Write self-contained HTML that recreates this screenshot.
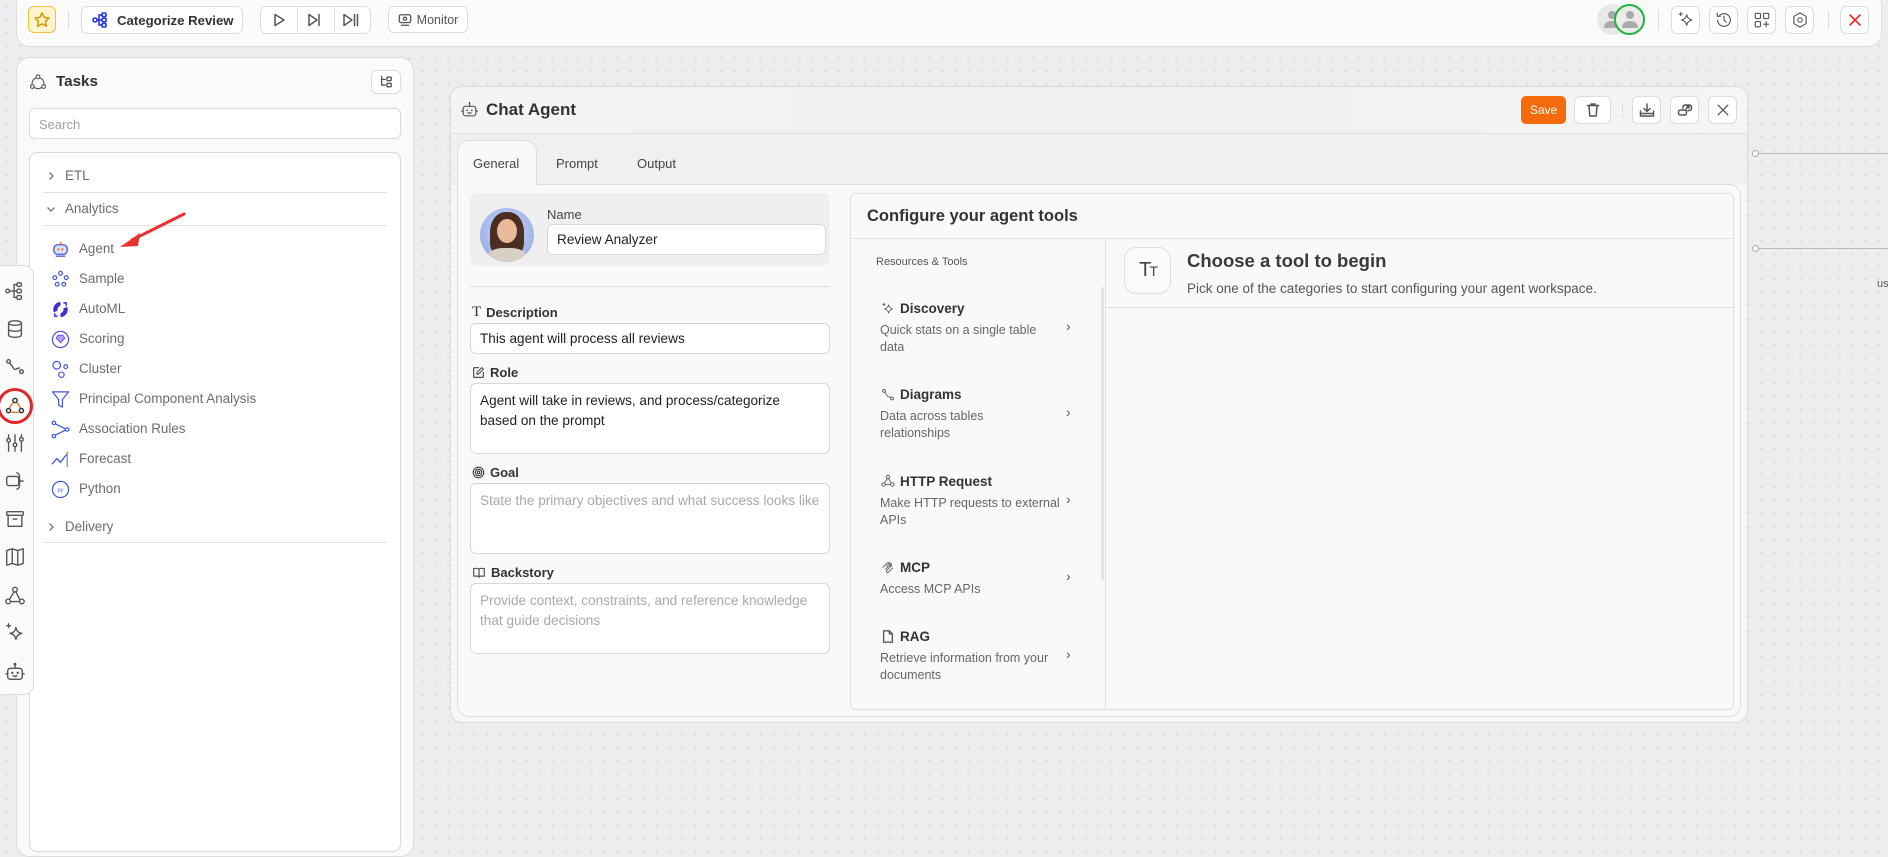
<!DOCTYPE html>
<html><head><meta charset="utf-8">
<style>
*{box-sizing:border-box;margin:0;padding:0}
body{width:1888px;height:822px;overflow:hidden;position:relative;font-family:"Liberation Sans",sans-serif;background:#ededef;background-image:radial-gradient(#d6d6da 1px,transparent 1.2px);background-size:13px 13px;color:#333}
.a{position:absolute}
.btn{position:absolute;border:1px solid #dcdcdc;border-radius:6px;background:#fff;display:flex;align-items:center;justify-content:center}
svg{display:block}
.ic{fill:none;stroke:#555;stroke-width:1.5;stroke-linecap:round;stroke-linejoin:round}
.li{position:absolute;left:79px;font-size:13.4px;color:#6b6b73}
.lic{position:absolute;left:51px;width:19px;height:19px}
.lbl{position:absolute;left:472px;font-size:13px;font-weight:bold;color:#333;display:flex;align-items:center;gap:5px}
.inp{position:absolute;left:470px;width:360px;border:1px solid #d8d8d8;border-radius:6px;background:#fff;font-size:13.6px;color:#222;padding:7px 9px;line-height:20px}
.ph{color:#a8a8ae}
.tt{position:absolute;left:900px;font-size:13.5px;font-weight:bold;color:#333}
.td{position:absolute;left:880px;font-size:12.5px;color:#666;line-height:17px;white-space:nowrap}
.chev{position:absolute;left:1066px;font-size:14px;color:#555}
.ri{position:absolute;left:6px;width:22px;height:22px}
</style></head><body>

<!-- top bar -->
<div class="a" style="left:16px;top:-10px;width:1866px;height:57px;background:#fbfbfb;border:1px solid #dedede;border-radius:14px"></div>
<div class="btn" style="left:28px;top:6px;width:28px;height:27px;background:#fff4cc;border-color:#f0c040">
<svg width="18" height="18" viewBox="0 0 24 24"><path d="M12 2.5l2.9 6 6.5.8-4.8 4.5 1.2 6.5L12 17.1 6.2 20.3l1.2-6.5L2.6 9.3l6.5-.8z" fill="none" stroke="#d39a00" stroke-width="2" stroke-linejoin="round"/></svg></div>
<div class="a" style="left:68px;top:10px;width:1px;height:20px;background:#ddd"></div>
<div class="btn" style="left:81px;top:6px;width:162px;height:28px;justify-content:flex-start;padding-left:10px;gap:9px;font-weight:bold;font-size:13.2px;color:#333;white-space:nowrap">
<svg width="16" height="16" viewBox="0 0 16 16"><g fill="none" stroke="#2233dd" stroke-width="1.6"><circle cx="3" cy="8" r="2"/><rect x="10" y="1" width="4" height="3.5" rx="1"/><rect x="10" y="6.2" width="4" height="3.5" rx="1"/><rect x="10" y="11.5" width="4" height="3.5" rx="1"/><path d="M5 8h5M7 8V3h3M7 8v5h3"/></g></svg>Categorize Review</div>
<div class="btn" style="left:260px;top:6px;width:111px;height:28px;justify-content:space-around">
<svg width="16" height="16" viewBox="0 0 16 16"><path class="ic" d="M4 2.5l9 5.5-9 5.5z"/></svg>
<svg width="16" height="16" viewBox="0 0 16 16"><path class="ic" d="M3 2.5l8 5.5-8 5.5zM13 2.5v11"/></svg>
<svg width="18" height="16" viewBox="0 0 18 16"><path class="ic" d="M2 2.5l8 5.5-8 5.5zM12.5 2.5v11M15.5 2.5v11"/></svg>
</div>
<div class="a" style="left:297px;top:6px;width:1px;height:28px;background:#ddd"></div>
<div class="a" style="left:334px;top:6px;width:1px;height:28px;background:#ddd"></div>
<div class="btn" style="left:388px;top:6px;width:80px;height:27px;gap:5px;font-size:12.5px;color:#555">
<svg width="14" height="14" viewBox="0 0 16 16"><g class="ic"><rect x="1.5" y="2" width="13" height="9" rx="2"/><circle cx="8" cy="6.5" r="1.8"/><path d="M4 14h8"/></g></svg>Monitor</div>

<div class="a" style="left:1597px;top:4px;width:31px;height:31px;border-radius:50%;background:#e8e8e8"></div>
<svg class="a" style="left:1602px;top:9px" width="20" height="20" viewBox="0 0 20 20"><circle cx="10" cy="6" r="4" fill="#aaa"/><path d="M2 19c0-5 3.5-7 8-7s8 2 8 7z" fill="#aaa"/></svg>
<div class="a" style="left:1614px;top:4px;width:31px;height:31px;border-radius:50%;background:#ececec;border:2px solid #1fb33c"></div>
<svg class="a" style="left:1620px;top:9px" width="20" height="20" viewBox="0 0 20 20"><circle cx="10" cy="6" r="4" fill="#aaa"/><path d="M2 19c0-5 3.5-7 8-7s8 2 8 7z" fill="#aaa"/></svg>
<div class="a" style="left:1658px;top:10px;width:1px;height:20px;background:#ddd"></div>
<div class="btn" style="left:1671px;top:6px;width:29px;height:28px"><svg width="18" height="18" viewBox="0 0 24 24"><path class="ic" d="M13 5c.8 4 2.5 5.7 7 7-4.5 1.3-6.2 3-7 7-.8-4-2.5-5.7-7-7 4.5-1.3 6.2-3 7-7zM5 2v4M3 4h4"/></svg></div>
<div class="btn" style="left:1709px;top:6px;width:29px;height:28px"><svg width="18" height="18" viewBox="0 0 24 24"><path class="ic" d="M3.5 12a8.5 8.5 0 1 0 2.5-6M3 3v4h4M12 7v5l3 3"/></svg></div>
<div class="btn" style="left:1747px;top:6px;width:29px;height:28px"><svg width="18" height="18" viewBox="0 0 24 24"><g class="ic"><rect x="3" y="3" width="7" height="7" rx="1.5"/><rect x="14" y="3" width="7" height="7" rx="1.5"/><rect x="3" y="14" width="7" height="7" rx="1.5"/><path d="M17.5 14v7M14 17.5h7"/></g></svg></div>
<div class="btn" style="left:1785px;top:6px;width:29px;height:28px"><svg width="18" height="18" viewBox="0 0 24 24"><g class="ic"><path d="M12 2.5l8.2 4.75v9.5L12 21.5l-8.2-4.75v-9.5z"/><circle cx="12" cy="12" r="3"/></g></svg></div>
<div class="a" style="left:1828px;top:10px;width:1px;height:20px;background:#ddd"></div>
<div class="btn" style="left:1840px;top:6px;width:29px;height:28px"><svg width="16" height="16" viewBox="0 0 16 16"><path d="M3 3l10 10M13 3L3 13" stroke="#e53030" stroke-width="1.7" stroke-linecap="round"/></svg></div>

<!-- canvas lines -->
<div class="a" style="left:1757px;top:153px;width:131px;height:1px;background:#b8b8bc"></div>
<div class="a" style="left:1752px;top:150px;width:7px;height:7px;border-radius:50%;border:1px solid #aaa;background:#fff"></div>
<div class="a" style="left:1757px;top:248px;width:131px;height:1px;background:#b8b8bc"></div>
<div class="a" style="left:1752px;top:245px;width:7px;height:7px;border-radius:50%;border:1px solid #aaa;background:#fff"></div>
<div class="a" style="left:1877px;top:278px;font-size:11px;color:#555">us</div>

<!-- tasks panel -->
<div class="a" style="left:16px;top:57px;width:398px;height:800px;background:#fafafa;border:1px solid #dcdcdc;border-radius:14px"></div>
<svg class="a" style="left:29px;top:73px" width="18" height="18" viewBox="0 0 24 24"><g class="ic"><circle cx="12" cy="5" r="2.5"/><circle cx="4.5" cy="18" r="2.5"/><circle cx="19.5" cy="18" r="2.5"/><path d="M9.7 6.3A8.5 8.5 0 0 0 4 14.5M14.3 6.3A8.5 8.5 0 0 1 20 14.5M7.5 19.5a8.5 8.5 0 0 0 9 0"/></g></svg>
<div class="a" style="left:56px;top:73px;font-size:15.2px;font-weight:bold;color:#333">Tasks</div>
<div class="btn" style="left:371px;top:70px;width:30px;height:24px"><svg width="14" height="14" viewBox="0 0 16 16"><g class="ic" stroke-width="1.3"><path d="M3 1.5v10h4M3 5h4"/><rect x="9" y="2.5" width="5" height="4" rx="1"/><rect x="9" y="9.5" width="5" height="4" rx="1"/></g></svg></div>
<div class="a" style="left:29px;top:108px;width:372px;height:31px;border:1px solid #d8d8d8;border-radius:6px;background:#fff;font-size:13px;color:#a0a0a6;padding:8px 9px">Search</div>
<div class="a" style="left:29px;top:152px;width:372px;height:700px;border:1px solid #d8d8d8;border-radius:8px;background:#fff"></div>
<svg class="a" style="left:45px;top:170px" width="12" height="12" viewBox="0 0 12 12"><path d="M4.5 2.5l3.5 3.5-3.5 3.5" fill="none" stroke="#777" stroke-width="1.3"/></svg>
<div class="li" style="left:65px;top:168px;font-size:13.4px">ETL</div>
<div class="a" style="left:43px;top:192px;width:344px;height:1px;background:#e2e2e2"></div>
<svg class="a" style="left:45px;top:203px" width="12" height="12" viewBox="0 0 12 12"><path d="M2.5 4.5l3.5 3.5 3.5-3.5" fill="none" stroke="#777" stroke-width="1.3"/></svg>
<div class="li" style="left:65px;top:201px;font-size:13.4px">Analytics</div>
<div class="a" style="left:43px;top:225px;width:344px;height:1px;background:#e2e2e2"></div>

<svg class="lic" style="top:240px" viewBox="0 0 20 20"><rect x="3" y="5" width="14" height="10" rx="4" fill="#dde4ff" stroke="#4559d6" stroke-width="1.4"/><circle cx="8" cy="10" r="1.3" fill="#f07a30"/><circle cx="12" cy="10" r="1.3" fill="#f07a30"/><path d="M10 5V2" stroke="#f07a30" stroke-width="1.3"/><path d="M5 17h10" stroke="#4559d6" stroke-width="1.4"/></svg>
<div class="li" style="top:241px">Agent</div>
<svg class="lic" style="top:270px" viewBox="0 0 20 20"><g fill="none" stroke="#4559d6" stroke-width="1.3"><circle cx="10" cy="3.5" r="2"/><circle cx="4" cy="8" r="2"/><circle cx="16" cy="8" r="2"/><circle cx="6.5" cy="15" r="2"/><circle cx="13.5" cy="15" r="2"/></g></svg>
<div class="li" style="top:271px">Sample</div>
<svg class="lic" style="top:300px" viewBox="0 0 20 20"><path d="M10 2a8 8 0 0 0-7 11l4-2a4 4 0 0 1 3-5z" fill="#3b2fd6"/><path d="M10 18a8 8 0 0 0 7-11l-4 2a4 4 0 0 1-3 5z" fill="#3b2fd6"/><path d="M13 3l3 0 0 3M7 17l-3 0 0-3" stroke="#3b2fd6" stroke-width="1.6" fill="none"/></svg>
<div class="li" style="top:301px">AutoML</div>
<svg class="lic" style="top:330px" viewBox="0 0 20 20"><circle cx="10" cy="10" r="8.5" fill="none" stroke="#4559d6" stroke-width="1.3"/><path d="M5.5 8.5l2-3h5l2 3-4.5 5z" fill="#b2a0f0" stroke="#6a4ed6" stroke-width="1"/></svg>
<div class="li" style="top:331px">Scoring</div>
<svg class="lic" style="top:360px" viewBox="0 0 20 20"><g fill="none" stroke="#4559d6" stroke-width="1.3"><circle cx="6" cy="5.5" r="4"/><circle cx="15.5" cy="7" r="2"/><circle cx="11" cy="15.5" r="2.8"/></g></svg>
<div class="li" style="top:361px">Cluster</div>
<svg class="lic" style="top:390px" viewBox="0 0 20 20"><path d="M1.5 2h17l-6.5 8v8l-4-2v-6z" fill="none" stroke="#4559d6" stroke-width="1.3" stroke-linejoin="round"/></svg>
<div class="li" style="top:391px">Principal Component Analysis</div>
<svg class="lic" style="top:420px" viewBox="0 0 20 20"><g fill="none" stroke="#4559d6" stroke-width="1.3"><circle cx="3" cy="3" r="1.8"/><circle cx="17" cy="10" r="1.8"/><circle cx="3" cy="17" r="1.8"/><path d="M4.5 4l11 5.5M4.5 16l11-5.5"/></g></svg>
<div class="li" style="top:421px">Association Rules</div>
<svg class="lic" style="top:450px" viewBox="0 0 20 20"><path d="M1 15l5-6 4 4 6-8" fill="none" stroke="#4559d6" stroke-width="1.4"/><path d="M17 3v15" stroke="#4559d6" stroke-width="1"/><path d="M16 4l2-2" stroke="#f07a30" stroke-width="1.2"/></svg>
<div class="li" style="top:451px">Forecast</div>
<svg class="lic" style="top:480px" viewBox="0 0 20 20"><circle cx="10" cy="10" r="8.5" fill="none" stroke="#4559d6" stroke-width="1.3"/><text x="10" y="12" font-size="6" text-anchor="middle" fill="#4559d6" font-family="Liberation Sans">py</text></svg>
<div class="li" style="top:481px">Python</div>
<svg class="a" style="left:45px;top:521px" width="12" height="12" viewBox="0 0 12 12"><path d="M4.5 2.5l3.5 3.5-3.5 3.5" fill="none" stroke="#777" stroke-width="1.3"/></svg>
<div class="li" style="left:65px;top:519px;font-size:13.4px">Delivery</div>
<div class="a" style="left:43px;top:542px;width:344px;height:1px;background:#e2e2e2"></div>

<!-- red arrow -->
<svg class="a" style="left:110px;top:205px" width="80" height="50" viewBox="0 0 80 50"><path d="M74 9L22 35" stroke="#e8322f" stroke-width="3" stroke-linecap="round"/><path d="M10 42l20-14-2 13z" fill="#e8322f"/></svg>

<!-- icon rail -->
<div class="a" style="left:-10px;top:265px;width:44px;height:430px;background:#fafafa;border:1px solid #dcdcdc;border-radius:10px"></div>
<svg class="ri" style="left:4px;top:280px" viewBox="0 0 24 24"><g class="ic" stroke-width="1.3"><circle cx="4" cy="12" r="2"/><rect x="14" y="3" width="5" height="4" rx="1.5"/><rect x="14" y="10" width="5" height="4" rx="1.5"/><rect x="14" y="17" width="5" height="4" rx="1.5"/><path d="M6 12h8M11 12V5h3M11 12v7h3"/></g></svg>
<svg class="ri" style="left:4px;top:318px" viewBox="0 0 24 24"><g class="ic" stroke-width="1.3"><ellipse cx="12" cy="5.5" rx="7" ry="2.5"/><path d="M5 5.5v13c0 1.4 3 2.5 7 2.5s7-1.1 7-2.5v-13M5 12c0 1.4 3 2.5 7 2.5s7-1.1 7-2.5"/></g></svg>
<svg class="ri" style="left:4px;top:356px" viewBox="0 0 24 24"><g class="ic" stroke-width="1.3"><circle cx="5" cy="6" r="2"/><circle cx="19" cy="17" r="2"/><path d="M6.5 7.5l4 6c1 1.5 2 1.5 3 .5l3.5-1"/></g></svg>
<div class="a" style="left:-3px;top:388px;width:36px;height:36px;border-radius:50%;border:3.5px solid #e0282a;background:#fff"></div>
<svg class="ri" style="left:4px;top:395px" viewBox="0 0 24 24"><g fill="none" stroke="#333" stroke-width="1.6"><circle cx="12" cy="6" r="2.3"/><circle cx="5" cy="17" r="2.3"/><circle cx="19" cy="17" r="2.3"/></g><path d="M10 8l-4 6M14 8l4 6M8 19h8" stroke="#f07a30" stroke-width="1.6" fill="none"/></svg>
<svg class="ri" style="left:4px;top:432px" viewBox="0 0 24 24"><g class="ic" stroke-width="1.3"><path d="M5 3v18M12 3v18M19 3v18"/><circle cx="5" cy="9" r="2" fill="#fafafa"/><circle cx="12" cy="14" r="2" fill="#fafafa"/><circle cx="19" cy="8" r="2" fill="#fafafa"/></g></svg>
<svg class="ri" style="left:4px;top:470px" viewBox="0 0 24 24"><g class="ic" stroke-width="1.3"><rect x="3" y="7" width="13" height="10" rx="2"/><path d="M14 3c3 1 3 2 3 9s0 8-3 9M17 12h4"/></g></svg>
<svg class="ri" style="left:4px;top:508px" viewBox="0 0 24 24"><g class="ic" stroke-width="1.3"><rect x="3" y="4" width="18" height="4" rx="1"/><path d="M4.5 8v12h15V8M10 12h4"/></g></svg>
<svg class="ri" style="left:4px;top:546px" viewBox="0 0 24 24"><g class="ic" stroke-width="1.3"><path d="M3 5l6-2 6 2 6-2v16l-6 2-6-2-6 2zM9 3v16M15 5v16"/></g></svg>
<svg class="ri" style="left:4px;top:585px" viewBox="0 0 24 24"><g class="ic" stroke-width="1.3"><circle cx="12" cy="5" r="2.5"/><circle cx="4.5" cy="18" r="2.5"/><circle cx="19.5" cy="18" r="2.5"/><path d="M11 7.5L6 15.5M13 7.5l4 8M7 18h10"/></g></svg>
<svg class="ri" style="left:4px;top:622px" viewBox="0 0 24 24"><path class="ic" stroke-width="1.3" d="M13 6c.8 4 2.5 5.7 6.5 6.5-4 .8-5.7 2.5-6.5 6.5-.8-4-2.5-5.7-6.5-6.5 4-.8 5.7-2.5 6.5-6.5zM5 2v4M3 4h4"/></svg>
<svg class="ri" style="left:4px;top:661px" viewBox="0 0 24 24"><g class="ic" stroke-width="1.3"><rect x="4" y="8" width="16" height="12" rx="3"/><path d="M12 8V4M2 14h2M20 14h2M10 16l2 1 2-1"/><circle cx="12" cy="3.5" r=".8" fill="#555"/><circle cx="9" cy="13" r=".6"/><circle cx="15" cy="13" r=".6"/></g></svg>

<!-- chat agent panel -->
<div class="a" style="left:450px;top:86px;width:1298px;height:637px;background:#f7f7f7;border:1px solid #dadada;border-radius:12px;overflow:hidden">
 <div class="a" style="left:0;top:0;width:100%;height:47px;background:linear-gradient(90deg,#f4f4f4,#f1efef 50%,#f5f5f5);border-bottom:1px solid #e0e0e0"></div>
 <div class="a" style="left:0;top:47px;width:100%;height:51px;background:#f1f0f0"></div>
</div>
<svg class="a" style="left:460px;top:100px" width="19" height="19" viewBox="0 0 24 24"><g class="ic" stroke-width="1.6" stroke="#333"><rect x="4" y="8" width="16" height="12" rx="3"/><path d="M12 8V4M2 14h2M20 14h2M10 16l2 1 2-1"/></g><circle cx="12" cy="3.5" r="1" fill="#333"/><circle cx="9" cy="13" r="1" fill="#333"/><circle cx="15" cy="13" r="1" fill="#333"/></svg>
<div class="a" style="left:486px;top:100px;font-size:17px;font-weight:bold;color:#333">Chat Agent</div>
<div class="a" style="left:1521px;top:96px;width:45px;height:28px;background:#f56b0c;border-radius:5px;color:#fff;font-size:12px;display:flex;align-items:center;justify-content:center">Save</div>
<div class="btn" style="left:1574px;top:96px;width:37px;height:28px"><svg width="16" height="16" viewBox="0 0 16 16"><path class="ic" d="M2.5 3.5h11M6 3.5V2h4v1.5M4 3.5l.8 10.5h6.4L12 3.5"/></svg></div>
<div class="a" style="left:1622px;top:102px;width:1px;height:16px;background:#ddd"></div>
<div class="btn" style="left:1632px;top:96px;width:29px;height:28px"><svg width="16" height="16" viewBox="0 0 16 16"><path class="ic" d="M1.5 9v5h13V9M8 2v7M5 6.5L8 9.5 11 6.5M1.5 11.5h13"/></svg></div>
<div class="btn" style="left:1670px;top:96px;width:29px;height:28px"><svg width="16" height="16" viewBox="0 0 16 16"><g class="ic" stroke-width="1.3"><rect x="1.5" y="8" width="8" height="5" rx="2"/><path d="M6 6V5a2 2 0 0 1 2-2h4.5a2 2 0 0 1 2 2v1.5a2 2 0 0 1-2 2H11M9 7l3-3M10 4h2v2"/></g></svg></div>
<div class="btn" style="left:1708px;top:96px;width:29px;height:28px"><svg width="14" height="14" viewBox="0 0 16 16"><path d="M2.5 2.5l11 11M13.5 2.5l-11 11" stroke="#555" stroke-width="1.4" stroke-linecap="round"/></svg></div>

<!-- tabs -->
<div class="a" style="left:457px;top:184px;width:1284px;height:533px;background:#f9f9f9;border:1px solid #dedede;border-radius:0 12px 12px 12px"></div>
<div class="a" style="left:457px;top:140px;width:80px;height:46px;background:#f9f9f9;border:1px solid #dedede;border-bottom:none;border-radius:12px 12px 0 0"></div>
<div class="a" style="left:473px;top:156px;font-size:13px;color:#444">General</div>
<div class="a" style="left:556px;top:156px;font-size:13px;color:#444">Prompt</div>
<div class="a" style="left:637px;top:156px;font-size:13px;color:#444">Output</div>

<!-- left form -->
<div class="a" style="left:470px;top:193px;width:360px;height:73px;background:#efefef;border-radius:8px"></div>
<div class="a" style="left:480px;top:208px;width:54px;height:54px;border-radius:50%;background:radial-gradient(circle at 50% 40%,#c9d6f5,#9fb3e8 70%);overflow:hidden">
 <div class="a" style="left:10px;top:4px;width:34px;height:44px;border-radius:45% 45% 30% 30%;background:#4a2e22"></div>
 <div class="a" style="left:17px;top:11px;width:20px;height:24px;border-radius:50%;background:#e9b99a"></div>
 <div class="a" style="left:8px;top:40px;width:38px;height:20px;border-radius:40% 40% 0 0;background:#d9cfc5"></div>
</div>
<div class="a" style="left:547px;top:207px;font-size:13px;color:#444">Name</div>
<div class="a" style="left:547px;top:224px;width:279px;height:31px;border:1px solid #d8d8d8;border-radius:6px;background:#fff;font-size:13.6px;color:#222;padding:7px 9px">Review Analyzer</div>
<div class="a" style="left:470px;top:286px;width:360px;height:1px;background:#dedede"></div>

<div class="lbl" style="top:304px"><span style="font-family:'Liberation Serif',serif;font-size:15px;font-weight:normal">T</span>Description</div>
<div class="inp" style="top:323px;height:31px;padding-top:5px">This agent will process all reviews</div>
<div class="lbl" style="top:365px"><svg width="13" height="13" viewBox="0 0 16 16"><path class="ic" stroke="#444" d="M8 2H3a1 1 0 0 0-1 1v10a1 1 0 0 0 1 1h10a1 1 0 0 0 1-1V8M12 2l2 2-6 6H6V8z"/></svg>Role</div>
<div class="inp" style="top:383px;height:71px">Agent will take in reviews, and process/categorize based on the prompt</div>
<div class="lbl" style="top:465px"><svg width="13" height="13" viewBox="0 0 16 16"><g fill="none" stroke="#444" stroke-width="1.4"><circle cx="8" cy="8" r="6.5"/><circle cx="8" cy="8" r="4"/><circle cx="8" cy="8" r="1.6"/></g></svg>Goal</div>
<div class="inp ph" style="top:483px;height:71px;white-space:nowrap">State the primary objectives and what success looks like</div>
<div class="lbl" style="top:565px"><svg width="14" height="13" viewBox="0 0 16 16"><path class="ic" stroke="#444" d="M1.5 3h4.5a2 2 0 0 1 2 2v9a1.5 1.5 0 0 0-1.5-1.5h-5zM14.5 3H10a2 2 0 0 0-2 2v9a1.5 1.5 0 0 1 1.5-1.5h5z"/></svg>Backstory</div>
<div class="inp ph" style="top:583px;height:71px">Provide context, constraints, and reference knowledge that guide decisions</div>

<!-- configure panel -->
<div class="a" style="left:850px;top:193px;width:884px;height:517px;background:#f9f9f9;border:1px solid #dedede;border-radius:6px"></div>
<div class="a" style="left:867px;top:207px;font-size:16.5px;font-weight:bold;color:#333">Configure your agent tools</div>
<div class="a" style="left:851px;top:238px;width:882px;height:1px;background:#e0e0e0"></div>
<div class="a" style="left:1105px;top:239px;width:1px;height:470px;background:#e0e0e0"></div>
<div class="a" style="left:1101px;top:287px;width:3px;height:293px;background:#e4e4e4;border-radius:2px"></div>
<div class="a" style="left:876px;top:256px;font-size:11px;color:#555">Resources &amp; Tools</div>

<svg class="a" style="left:881px;top:302px" width="14" height="14" viewBox="0 0 24 24"><path class="ic" stroke="#444" d="M13 5c.8 4 2.5 5.7 7 7-4.5 1.3-6.2 3-7 7-.8-4-2.5-5.7-7-7 4.5-1.3 6.2-3 7-7zM5 2v4M3 4h4"/></svg>
<div class="tt" style="top:301px">Discovery</div>
<div class="td" style="top:322px">Quick stats on a single table<br>data</div>
<div class="chev" style="top:318px">&#x203A;</div>

<svg class="a" style="left:881px;top:388px" width="14" height="14" viewBox="0 0 24 24"><g class="ic" stroke="#444" stroke-width="2"><circle cx="5" cy="5" r="2.5"/><circle cx="19" cy="18" r="2.5"/><path d="M7 7l4 7c1 1.5 2 1.5 3 1l3 1.5"/></g></svg>
<div class="tt" style="top:387px">Diagrams</div>
<div class="td" style="top:408px">Data across tables<br>relationships</div>
<div class="chev" style="top:404px">&#x203A;</div>

<svg class="a" style="left:881px;top:474px" width="14" height="14" viewBox="0 0 24 24"><g class="ic" stroke="#444" stroke-width="1.8"><circle cx="12" cy="5" r="3"/><circle cx="4.5" cy="18" r="3"/><circle cx="19.5" cy="18" r="3"/><path d="M11 8L6 15M13 8l4.5 7.5M7.5 18h9"/></g></svg>
<div class="tt" style="top:474px">HTTP Request</div>
<div class="td" style="top:495px">Make HTTP requests to external<br>APIs</div>
<div class="chev" style="top:491px">&#x203A;</div>

<svg class="a" style="left:881px;top:561px" width="14" height="14" viewBox="0 0 24 24"><path class="ic" stroke="#444" stroke-width="2" d="M3 11l8-8a3 3 0 0 1 4 4l-7 7M9 9l5-5a3 3 0 0 1 4 4l-8 8a2 2 0 0 0 3 3l7-7M15 6l3 3"/></svg>
<div class="tt" style="top:560px">MCP</div>
<div class="td" style="top:581px">Access MCP APIs</div>
<div class="chev" style="top:568px">&#x203A;</div>

<svg class="a" style="left:881px;top:629px" width="14" height="15" viewBox="0 0 16 16"><path class="ic" stroke="#444" d="M3 1.5h6.5l3.5 3.5v9.5H3zM9.5 1.5V5H13"/></svg>
<div class="tt" style="top:629px">RAG</div>
<div class="td" style="top:650px">Retrieve information from your<br>documents</div>
<div class="chev" style="top:646px">&#x203A;</div>

<div class="a" style="left:1124px;top:247px;width:47px;height:47px;border:1px solid #dedede;border-radius:12px;background:#fafafa;font-size:20px;color:#444;display:flex;align-items:center;justify-content:center;letter-spacing:-2px">T<span style="font-size:14px">T</span></div>
<div class="a" style="left:1187px;top:250px;font-size:18.5px;font-weight:bold;color:#3a3a3a">Choose a tool to begin</div>
<div class="a" style="left:1187px;top:281px;font-size:13.5px;color:#555">Pick one of the categories to start configuring your agent workspace.</div>
<div class="a" style="left:1106px;top:307px;width:627px;height:1px;background:#e0e0e0"></div>

</body></html>
